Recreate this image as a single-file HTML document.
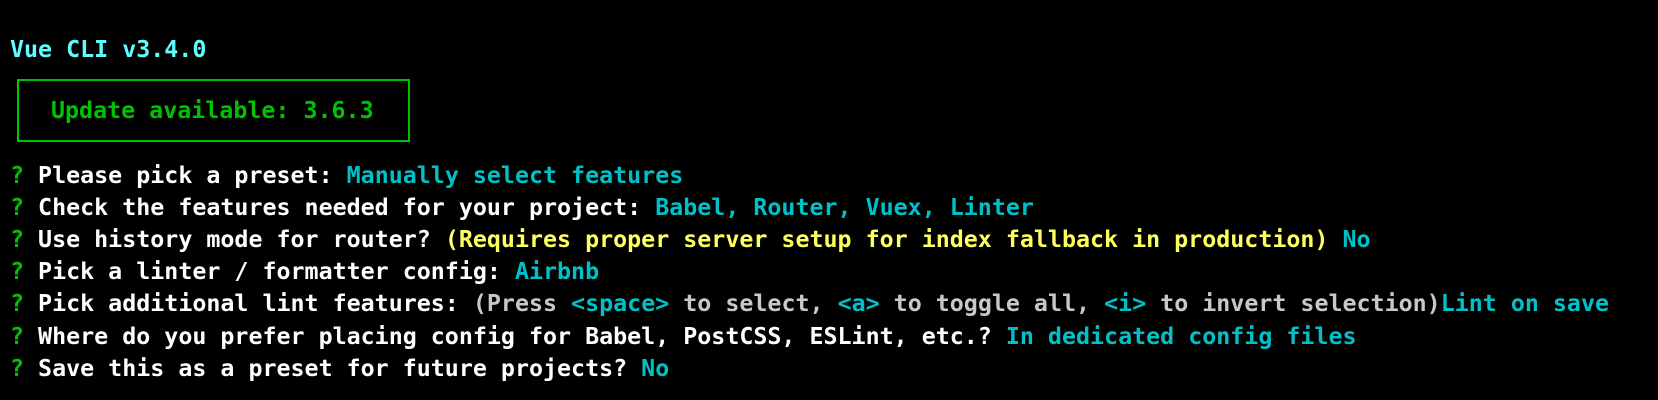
<!DOCTYPE html>
<html><head><meta charset="utf-8"><style>
html,body{margin:0;padding:0;background:#000;width:1658px;height:400px;overflow:hidden}
body{font-family:"DejaVu Sans Mono","Liberation Mono",monospace;font-size:23.3px;font-weight:bold;color:#fff;position:relative}
.l{position:absolute;left:10px;white-space:pre;line-height:32.2px}
.c{color:#60fdff}.t{color:#00c0c8}.g{color:#00c200}.y{color:#ffff60}.gr{color:#c8c8c8}
.box{position:absolute;left:17px;top:79px;width:389px;height:59px;border:2px solid #00c200}
</style></head><body>
<div class="l c" style="top:34px">Vue CLI v3.4.0</div>
<div class="box"></div>
<div class="l g" style="top:94.5px;left:51px">Update available: 3.6.3</div>
<div class="l" style="top:159.5px"><span class="g">?</span> Please pick a preset: <span class="t">Manually select features</span></div>
<div class="l" style="top:191.7px"><span class="g">?</span> Check the features needed for your project: <span class="t">Babel, Router, Vuex, Linter</span></div>
<div class="l" style="top:223.9px"><span class="g">?</span> Use history mode for router? <span class="y">(Requires proper server setup for index fallback in production)</span> <span class="t">No</span></div>
<div class="l" style="top:256.1px"><span class="g">?</span> Pick a linter / formatter config: <span class="t">Airbnb</span></div>
<div class="l" style="top:288.3px"><span class="g">?</span> Pick additional lint features: <span class="gr">(Press <span class="t">&lt;space&gt;</span> to select, <span class="t">&lt;a&gt;</span> to toggle all, <span class="t">&lt;i&gt;</span> to invert selection)</span><span class="t">Lint on save</span></div>
<div class="l" style="top:320.5px"><span class="g">?</span> Where do you prefer placing config for Babel, PostCSS, ESLint, etc.? <span class="t">In dedicated config files</span></div>
<div class="l" style="top:352.7px"><span class="g">?</span> Save this as a preset for future projects? <span class="t">No</span></div>
</body></html>
